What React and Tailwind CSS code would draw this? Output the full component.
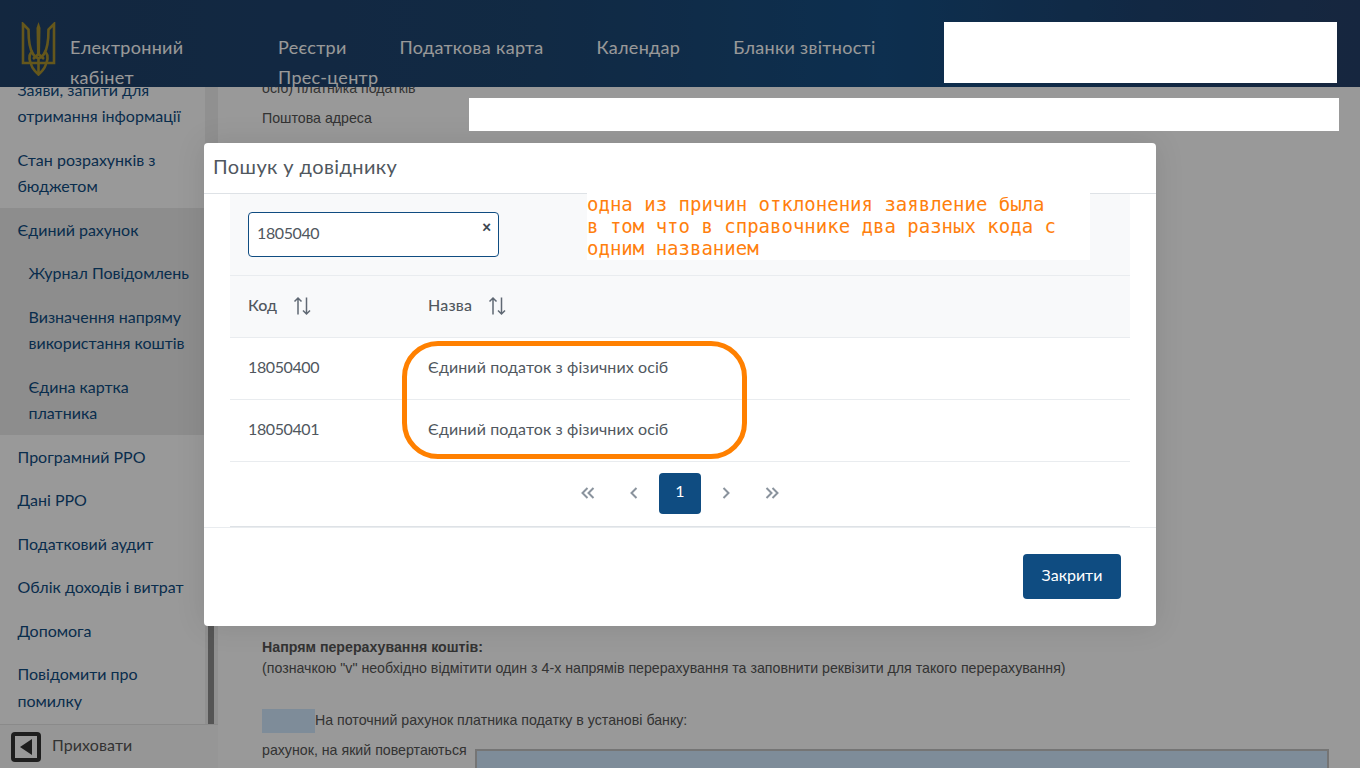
function Trident() {
  return (
    <svg width="35" height="54" viewBox="0 0 35 54" fill="none" stroke="#a8922f" strokeWidth="2.6" className="shrink-0">
      <path d="M17.5 0 L19.5 6 L19 33 H16 L15.5 6 Z" fill="#a8922f" stroke="none" />
      <path d="M2 2 L7.5 7.5 C7.5 18 8.5 27 12 32 C14 35 16 36 17.5 36 C19 36 21 35 23 32 C26.5 27 27.5 18 27.5 7.5 L33 2 V41 H2 Z" />
      <path d="M9.5 41 C7.5 35 8.5 31 12 29.5 M25.5 41 C27.5 35 26.5 31 23 29.5" />
      <path d="M10 41 C10 46 14 49 17.5 52.5 C21 49 25 46 25 41" />
      <path d="M17.5 36 V52 M12 37 L17.5 32 L23 37" />
    </svg>
  );
}
function Sort() {
  return (
    <svg width="20" height="20" viewBox="0 0 20 20" fill="none" stroke="#5f6873" strokeWidth="1.5" className="ml-[15px]">
      <path d="M6 18.5 V2 M2.5 5.5 L6 2 L9.5 5.5" />
      <path d="M14.5 1.5 V18 M11 14.5 L14.5 18 L18 14.5" />
    </svg>
  );
}
function Chev({ d }) {
  return (
    <svg width="18" height="18" viewBox="0 0 18 18" fill="none" stroke="#8a939d" strokeWidth="2">
      <path d={d} />
    </svg>
  );
}
const items = [
  { t: ["Заяви, запити для", "отримання інформації"] },
  { t: ["Стан розрахунків з", "бюджетом"] },
];
const sub = [["Журнал Повідомлень"], ["Визначення напряму", "використання коштів"], ["Єдина картка", "платника"]];
const after = [["Програмний РРО"], ["Дані РРО"], ["Податковий аудит"], ["Облік доходів і витрат"], ["Допомога"], ["Повідомити про", "помилку"]];
function Item({ lines, sub }) {
  return (
    <div className={"py-[8.5px] leading-[26.5px] text-[#0f4c81] " + (sub ? "pl-[28.5px]" : "pl-[17.5px]")}>
      {lines.map((l) => <div key={l} className="whitespace-nowrap">{l}</div>)}
    </div>
  );
}
export default function App() {
  return (
    <div className="relative w-[1360px] h-[768px] overflow-hidden bg-white font-['Lato','Noto_Sans',sans-serif] text-[16px]">
      <header className="relative z-10 h-[87px] flex overflow-hidden bg-[linear-gradient(90deg,#20416a_0%,#1d4672_40%,#164f84_65%,#1e4370_85%,#264069_100%)] text-white text-[18px] leading-[30px] tracking-[0.3px]">
        <div className="pl-[21px] pt-[22px]"><Trident /></div>
        <div className="ml-[14px] pt-[32px] w-[150px]">Електронний кабінет</div>
        <nav className="ml-[58px] pt-[32px] w-[660px] flex flex-wrap gap-x-[53px]">
          <span>Реєстри</span><span>Податкова карта</span><span>Календар</span><span>Бланки звітності</span><span>Прес-центр</span>
        </nav>
      </header>
      <div className="flex h-[681px]">
        <aside className="w-[218px] shrink-0 flex flex-col">
          <div className="flex-1 flex overflow-hidden">
            <div className="w-[205px] shrink-0 mt-[-19px]">
              {items.map((i) => <Item key={i.t[0]} lines={i.t} />)}
              <div className="bg-[#ebebeb]">
                <Item lines={["Єдиний рахунок"]} />
                {sub.map((l) => <Item key={l[0]} lines={l} sub />)}
              </div>
              {after.map((l) => <Item key={l[0]} lines={l} />)}
            </div>
            <div className="w-[13px] bg-[#f1f1f1] pl-[3px] flex flex-col justify-end">
              <div className="w-[6px] h-[200px] bg-[#8e8e8e]" />
            </div>
          </div>
          <div className="h-[44px] shrink-0 border-t border-[#e6e6e6] bg-[#fafafa] flex items-center pl-[11px]">
            <div className="w-[30px] h-[30px] rounded-[4px] bg-[#333] p-[4px]">
              <div className="w-full h-full bg-white flex items-center justify-center">
                <div className="w-0 h-0 border-y-[8px] border-y-transparent border-r-[12px] border-r-[#333]" />
              </div>
            </div>
            <span className="ml-[11px] pb-[4px] text-[#555] tracking-[0.1px]">Приховати</span>
          </div>
        </aside>
        <main className="flex-1 pl-[44px] text-[14.2px] leading-[20px] text-[#555] font-['Liberation_Sans',sans-serif] overflow-hidden">
          <div className="mt-[-9px] whitespace-nowrap">осіб) платника податків</div>
          <div className="mt-[10px]">Поштова адреса</div>
          <div className="mt-[509px] font-bold">Напрям перерахування коштів:</div>
          <div className="mt-[1px]">(позначкою "v" необхідно відмітити один з 4-х напрямів перерахування та заповнити реквізити для такого перерахування)</div>
          <div className="mt-[31px] flex items-center"><span className="w-[53px] h-[24px] bg-[#d3e9ff]" /><span className="pb-[2px]">На поточний рахунок платника податку в установі банку:</span></div>
          <div className="mt-[6px] flex items-start">
            <span className="pt-[1px] whitespace-nowrap">рахунок, на який повертаються</span>
            <div className="ml-[8px] mt-[10px] w-[854px] h-[40px] bg-[#d3e9ff] border-2 border-[#c3c3c3]" />
          </div>
        </main>
      </div>

      <div className="absolute inset-0 z-20 bg-black/40 pt-[143px] flex justify-center items-start">
        <div className="w-[952px] h-[483px] bg-white rounded-[4px] flex flex-col shadow-[0_0_30px_rgba(0,0,0,0.1)] text-[#50575e]">
          <div className="h-[51px] shrink-0 border-b border-[#dee2e6] pl-[9px] pb-[4px] flex items-center text-[20px] tracking-[0.4px]">Пошук у довіднику</div>
          <div className="h-[333px] shrink-0 px-[26px]">
            <div className="border-b border-[#dee2e6] h-[333px]">
              <div className="h-[82px] bg-[#f8f9fa] border-b border-[#e9ecef] pl-[18px] pt-[18px]">
                <div className="relative w-[251px] h-[45px] bg-white border border-[#0f4c81] rounded-[4px] pl-[8px] pb-[4px] flex items-center tracking-[-0.4px]">
                  1805040
                  <span className="absolute right-[7px] top-[4px] text-[16px] leading-[20px] font-black text-[#3c4650]">×</span>
                </div>
              </div>
              <div className="h-[62px] bg-[#f8f9fa] border-b border-[#e9ecef] flex items-center font-medium pb-[1px]">
                <div className="w-[198px] pl-[18px] flex items-center"><span className="pb-[2px]">Код</span><Sort /></div>
                <div className="flex items-center"><span className="pb-[2px] tracking-[0.2px]">Назва</span><Sort /></div>
              </div>
              {["18050400", "18050401"].map((c) => (
                <div key={c} className="h-[62px] border-b border-[#e9ecef] flex items-center pb-[3px]">
                  <div className="w-[198px] pl-[18px] tracking-[-0.4px]">{c}</div>
                  <div className="tracking-[0.1px]">Єдиний податок з фізичних осіб</div>
                </div>
              ))}
              <div className="h-[64px] flex items-center justify-center pb-[2px]">
                <span className="w-[46px] flex justify-center"><Chev d="M8.5 4 L3.5 9 L8.5 14 M14.5 4 L9.5 9 L14.5 14" /></span>
                <span className="w-[46px] flex justify-center"><Chev d="M11.5 4 L6.5 9 L11.5 14" /></span>
                <span className="w-[42px] h-[41px] mx-[2px] rounded-[4px] bg-[#0f4c81] text-white flex items-center justify-center pb-[4px]">1</span>
                <span className="w-[46px] flex justify-center"><Chev d="M6.5 4 L11.5 9 L6.5 14" /></span>
                <span className="w-[46px] flex justify-center"><Chev d="M3.5 4 L8.5 9 L3.5 14 M9.5 4 L14.5 9 L9.5 14" /></span>
              </div>
            </div>
          </div>
          <div className="flex-1 border-t border-[#e9ecef] flex justify-end items-start pt-[26px] pr-[35px]">
            <button className="w-[98px] h-[45px] rounded-[4px] bg-[#0f4c81] text-white pb-[3px]">Закрити</button>
          </div>
        </div>
      </div>

      <div className="absolute z-30 left-[944px] top-[22px] w-[393px] h-[61px] bg-white" />
      <div className="absolute z-30 left-[469px] top-[98px] w-[870px] h-[33px] bg-white" />
      <div className="absolute z-30 left-[587px] top-[193px] w-[503px] h-[67px] bg-white font-['DejaVu_Sans_Mono',monospace] text-[19px] leading-[22px] text-[#ff7f0e]">
        <div>одна из причин отклонения заявление была</div>
        <div>в том что в справочнике два разных кода с</div>
        <div>одним названием</div>
      </div>
      <div className="absolute z-30 left-[402px] top-[341px] w-[345px] h-[118px] border-[5px] border-[#ff8000] rounded-[36px]" />
    </div>
  );
}
